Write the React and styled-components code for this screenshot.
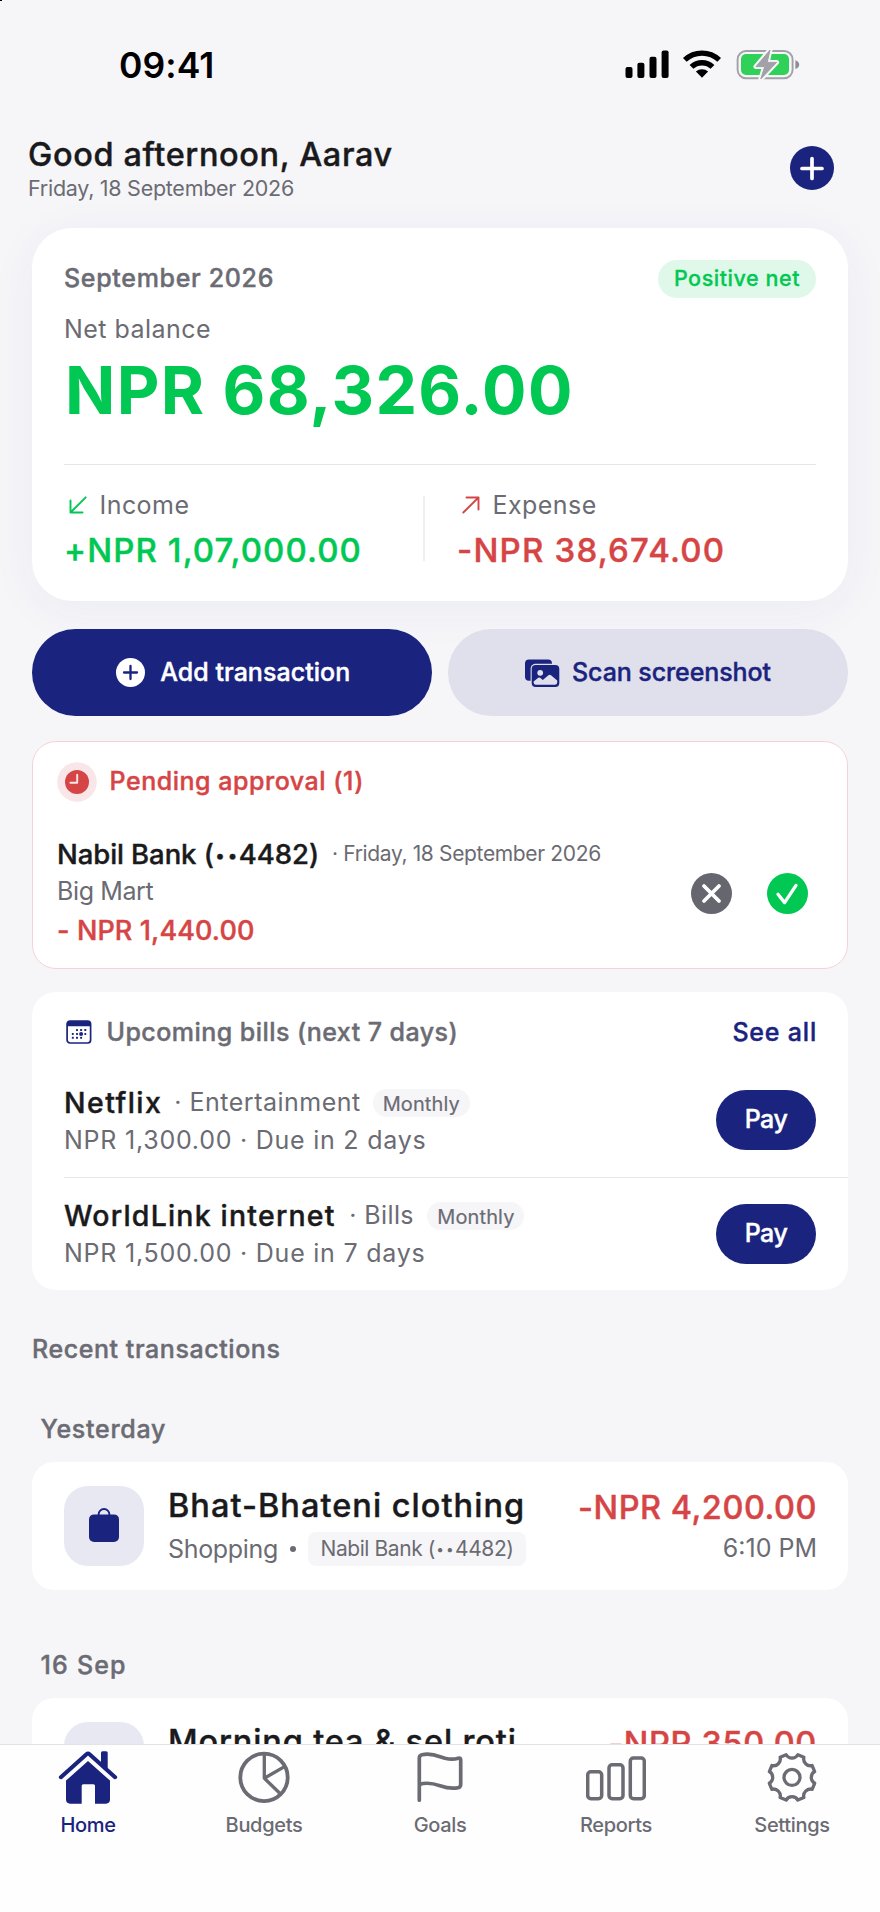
import React from "react";
import styled, { createGlobalStyle } from "styled-components";

const GlobalStyle = createGlobalStyle`
  * {
    box-sizing: border-box;
  }
  body {
    margin: 0;
    background: #f6f6f9;
    font-family: Inter, "Liberation Sans", sans-serif;
    color: #1a1a1c;
  }
  svg {
    display: block;
    flex-shrink: 0;
  }
`;

const colors = {
  bg: "#f6f6f9",
  navy: "#1a237e",
  green: "#00c853",
  red: "#d64545",
  gray: "#6b6b73",
};

const Screen = styled.div`
  position: relative;
  width: 880px;
  height: 1912px;
  display: flex;
  flex-direction: column;
  overflow: hidden;
`;

const Corner = styled.div`
  position: absolute;
  top: 0;
  left: 0;
  width: 2px;
  height: 1px;
  background: #000;
`;

const Content = styled.main`
  flex: 1;
  min-height: 0;
  overflow: hidden;
`;

/* the one text part: size, weight, line height, tracking and colour vary;
   the thin stroke takes medium text half way to semibold */
const Text = styled.span`
  display: block;
  white-space: nowrap;
  font-size: ${(p) => p.$size || 25}px;
  font-weight: ${(p) => p.$weight || 400};
  line-height: ${(p) => p.$line || 30}px;
  letter-spacing: ${(p) => p.$track || 0}px;
  color: ${(p) => p.$color || colors.gray};
  margin-top: ${(p) => p.$top || 0}px;
  -webkit-text-stroke: ${(p) => (p.$weight === 500 ? "0.4px" : "0")};
`;

const StatusBar = styled.div`
  height: 130px;
  padding: 48px 80.5px 0 119px;
  display: flex;
  justify-content: space-between;
`;

const StatusIcons = styled.div`
  display: flex;
  gap: 14.75px;
`;

const Header = styled.header`
  height: 98px;
  padding: 6px 46px 0 28px;
  display: flex;
  justify-content: space-between;
`;

const RoundButton = styled.button`
  width: ${(p) => p.$size}px;
  height: ${(p) => p.$size}px;
  margin: ${(p) => p.$top || 0}px 0 0;
  padding: 0;
  border: none;
  border-radius: 50%;
  background: ${(p) => p.$bg};
`;

const Body = styled.div`
  padding: 0 32px;
`;

const BalanceCard = styled.section`
  height: 372.6px;
  padding: 32px;
  border-radius: 40px;
  background: #fff;
  box-shadow: 0 8px 48px rgba(26, 35, 126, 0.05);
`;

const SpreadRow = styled.div`
  display: flex;
  justify-content: space-between;
`;

const NetBadge = styled.span`
  width: 158px;
  height: 38px;
  border-radius: 19px;
  background: #e0f8ea;
  color: ${colors.green};
  font-size: 21.5px;
  font-weight: 500;
  -webkit-text-stroke: 0.3px;
  letter-spacing: 0.55px;
  line-height: 37px;
  text-align: center;
`;

const Balance = styled(Text)`
  padding-left: 1px;
`;

const Stats = styled.div`
  display: flex;
  margin-top: 36px;
  padding-top: 25px;
  border-top: 1px solid #e6e6ea;
`;

const Stat = styled.div`
  width: ${(p) => p.$width || "auto"};
`;

const StatLabel = styled.div`
  display: flex;
  gap: 11.5px;
`;

const StatDivider = styled.div`
  width: 2px;
  height: 65px;
  margin: 6px 32px 0 0;
  background: #eeeef1;
`;

const Actions = styled.div`
  display: grid;
  grid-template-columns: 1fr 1fr;
  gap: 16px;
  margin-top: 28.4px;
`;

const ActionButton = styled.button`
  display: flex;
  align-items: center;
  justify-content: center;
  gap: ${(p) => p.$gap}px;
  height: 87.5px;
  padding: 0 0 0 ${(p) => p.$shift || 0}px;
  border: none;
  border-radius: 44px;
  background: ${(p) => p.$bg};
  color: ${(p) => p.$color};
  font-family: inherit;
  font-size: 25px;
  font-weight: 500;
  -webkit-text-stroke: 0.4px;
  letter-spacing: ${(p) => p.$track}px;
  line-height: 30px;

  span {
    margin-bottom: 2px;
  }
`;

const PendingCard = styled.section`
  height: 228px;
  margin-top: 24.5px;
  padding: 20px 39.5px 0 24px;
  border: 1px solid #f4d3d6;
  border-radius: 24px;
  background: #fff;
`;

const PendingHead = styled.div`
  display: flex;
  align-items: center;
  gap: 12.5px;
  height: 40px;

  ${Text} {
    margin-bottom: 2px;
  }
`;

const PendingRow = styled.div`
  display: flex;
  justify-content: space-between;
  margin-top: 35px;
`;

const PendingActions = styled.div`
  display: flex;
  gap: 35px;
  padding-top: 36px;
`;

const Line = styled.div`
  display: flex;
  gap: ${(p) => p.$gap || 0}px;
`;

const BillsCard = styled.section`
  height: 297.5px;
  margin-top: 23.5px;
  padding-left: 32px;
  border-radius: 24px;
  background: #fff;
`;

const BillsHead = styled.div`
  display: flex;
  gap: 14.5px;
  height: 71.5px;
  padding: 24px 31px 0 0;

  ${Text}:last-child {
    margin-left: auto;
  }
`;

const Bill = styled.div`
  display: flex;
  justify-content: space-between;
  align-items: center;
  height: 113px;
  padding-right: 32px;

  & + & {
    border-top: 1px solid #e8e8eb;
  }
`;

const Tag = styled.span`
  width: 97px;
  height: 28px;
  margin-top: 3px;
  border-radius: 14px;
  background: ${colors.bg};
  color: ${colors.gray};
  font-size: 20px;
  -webkit-text-stroke: 0.2px;
  letter-spacing: 0.1px;
  line-height: 31px;
  text-align: center;
`;

const PayButton = styled.button`
  width: 100px;
  height: 60px;
  padding: 0 0 2px;
  border: none;
  border-radius: 30px;
  background: ${colors.navy};
  color: #fff;
  font-family: inherit;
  font-size: 25px;
  font-weight: 500;
  -webkit-text-stroke: 0.4px;
  letter-spacing: -0.5px;
  line-height: 30px;
`;

const DayLabel = styled(Text)`
  padding-left: 8.5px;
`;

const TransactionCard = styled.article`
  display: flex;
  height: 128px;
  margin-top: 18px;
  padding: 24px 31px 24px 32px;
  border-radius: 22px;
  background: #fff;
`;

const IconTile = styled.div`
  display: flex;
  align-items: center;
  justify-content: center;
  width: 80px;
  height: 80px;
  margin-right: 24px;
  padding-bottom: 2px;
  border-radius: 24px;
  background: #e8e8f2;
`;

const Meta = styled.div`
  display: flex;
  align-items: center;
  gap: 12px;
  margin-top: 6px;
`;

const Dot = styled.i`
  width: 6px;
  height: 6px;
  border-radius: 50%;
  background: ${colors.gray};
`;

const AccountChip = styled.span`
  width: 218px;
  height: 34px;
  border-radius: 8px;
  background: ${colors.bg};
  color: ${colors.gray};
  font-size: 21px;
  letter-spacing: -0.42px;
  line-height: 33px;
  text-align: center;
  white-space: nowrap;
`;

/* small bullets that mask an account number */
const Mask = styled.span`
  margin: 0 -0.08em 0 0.08em;
  font-size: 0.65em;
  letter-spacing: 0.17em;
  line-height: 0;
  vertical-align: 0.11em;
`;

const AmountColumn = styled.div`
  display: flex;
  flex-direction: column;
  align-items: flex-end;
  margin-left: auto;
  padding-top: 2px;
`;

const TabBar = styled.nav`
  display: grid;
  grid-template-columns: repeat(5, 1fr);
  height: 168px;
  border-top: 1px solid #e4e4e8;
  background: #fefefe;
`;

const Tab = styled.a`
  display: flex;
  flex-direction: column;
  align-items: center;
  gap: 4.5px;
  padding-top: 2px;
  color: ${(p) => (p.$active ? colors.navy : colors.gray)};
  font-size: 20px;
  font-weight: 500;
  letter-spacing: -0.33px;
  line-height: 26px;
`;

const SignalIcon = () => (
  <svg width="44" height="32" viewBox="0 0 44 32">
    <rect x="0.5" y="19" width="7" height="11" rx="2" />
    <rect x="12.4" y="14.7" width="7" height="15.3" rx="2" />
    <rect x="24.5" y="8.7" width="7" height="21.3" rx="2" />
    <rect x="36.6" y="2.4" width="7" height="27.6" rx="2" />
  </svg>
);

const WifiIcon = () => (
  <svg width="38" height="32" viewBox="0 0 38 32">
    <g fill="none" stroke="#000" strokeWidth="5.4">
      <path d="M1.8 11.9A25.2 25.2 0 0 1 36.2 11.9" />
      <path d="M8.5 18.9A15.2 15.2 0 0 1 29.5 18.9" />
    </g>
    <path d="M19 29.8L12.9 23.6A8.8 8.8 0 0 1 25.1 23.6Z" />
  </svg>
);

const BatteryIcon = () => (
  <svg width="63.5" height="32" viewBox="0 0 63.5 32">
    <rect x="1.6" y="3" width="55" height="27.2" rx="8.5" fill="none" stroke="#a2a1a8" strokeWidth="1.9" />
    <rect x="5" y="6" width="48" height="21" rx="5" fill="#2fd158" />
    <path d="M59.4 12.2C62 12.8 63.2 14.6 63.2 16.6S62 20.4 59.4 21Z" fill="#8e8d94" />
    <path
      d="M34 2L20 18.6H28.7L24.8 31L40.6 14.4H31.2Z"
      fill={colors.bg}
      stroke={colors.bg}
      strokeWidth="5"
      strokeLinejoin="round"
    />
    <path d="M34 2L20 18.6H28.7L24.8 31L40.6 14.4H31.2Z" fill="#a2a1a8" stroke="#a2a1a8" strokeLinejoin="round" />
  </svg>
);

const PlusIcon = () => (
  <svg width="44" height="44" viewBox="0 0 44 44">
    <path d="M22 12.5V32.5M12 22.5H32" stroke="#fff" strokeWidth="3.7" strokeLinecap="round" />
  </svg>
);

const ArrowIn = () => (
  <svg width="24" height="30" viewBox="0 0 24 30" fill="none" stroke={colors.green} strokeWidth="1.9" strokeLinecap="round" strokeLinejoin="round">
    <path d="M21.7 7.3L6.5 22.5M6.5 10.5V22.5H18.5" />
  </svg>
);

const ArrowOut = () => (
  <svg width="24" height="30" viewBox="0 0 24 30" fill="none" stroke={colors.red} strokeWidth="1.9" strokeLinecap="round" strokeLinejoin="round">
    <path d="M6.3 22.5L21.5 7.5M9.5 7.5H21.5V19.5" />
  </svg>
);

const AddCircleIcon = () => (
  <svg width="29" height="29" viewBox="0 0 29 29">
    <circle cx="14.5" cy="14.5" r="14.5" fill="#fff" />
    <path d="M14.5 8V21M8 14.5H21" stroke={colors.navy} strokeWidth="2.3" strokeLinecap="round" />
  </svg>
);

const PhotosIcon = () => (
  <svg width="34.5" height="28" viewBox="0 0 34.5 28">
    <path d="M4 0.5H23a4 4 0 0 1 4 4V8H9V21.8H4a4 4 0 0 1-4-4V4.5a4 4 0 0 1 4-4Z" fill={colors.navy} />
    <rect x="5.6" y="4.8" width="29.2" height="24" rx="5" fill="#e0e0ec" />
    <rect x="6.7" y="5.9" width="27.6" height="22" rx="4" fill={colors.navy} />
    <circle cx="15.2" cy="13.8" r="2.9" fill="#e0e0ec" />
    <path
      d="M8.6 22.6L13.3 18.8Q14.4 18 15.4 18.9L17.8 21L23.4 16.2Q24.7 15.2 26 16.2L32.2 21.6V23.4a2.4 2.4 0 0 1-2.4 2.4H11a2.4 2.4 0 0 1-2.4-2.4Z"
      fill="#e0e0ec"
    />
  </svg>
);

const ClockIcon = () => (
  <svg width="40" height="40" viewBox="0 0 40 40">
    <circle cx="20" cy="20" r="19.8" fill="#f8e6e8" />
    <circle cx="20" cy="20" r="12" fill={colors.red} />
    <path d="M20.2 12.8V20.7H13.4" fill="none" stroke="#f8e6e8" strokeWidth="1.9" strokeLinecap="round" strokeLinejoin="round" />
  </svg>
);

const CrossIcon = () => (
  <svg width="41" height="41" viewBox="0 0 41 41">
    <path d="M13 13L28 28M28 13L13 28" stroke="#fff" strokeWidth="3.8" strokeLinecap="round" />
  </svg>
);

const CheckIcon = () => (
  <svg width="41" height="41" viewBox="0 0 41 41" fill="none">
    <path d="M11 21.3L17.6 29.6L29 12.4" stroke="#fff" strokeWidth="3.3" strokeLinecap="round" strokeLinejoin="round" />
  </svg>
);

const calendarDots = [
  [13, 14], [17.1, 14], [21.3, 14],
  [8.8, 17.9], [13, 17.9], [21.3, 17.9],
  [8.8, 21.8], [13, 21.8], [17.1, 21.8],
];

const CalendarIcon = () => (
  <svg width="28" height="30" viewBox="0 0 28 30" fill={colors.navy}>
    <rect x="3.1" y="5" width="23.5" height="22" rx="3" fill="none" stroke={colors.navy} strokeWidth="1.7" />
    <path d="M3 10.2V8a3 3 0 0 1 3-3H23.7a3 3 0 0 1 3 3V10.2Z" />
    {calendarDots.map(([x, y]) => (
      <rect key={`${x}-${y}`} x={x - 1} y={y - 1} width="2" height="2" rx="0.6" />
    ))}
    <circle cx="17.1" cy="17.9" r="2" />
  </svg>
);

const BagIcon = () => (
  <svg width="30" height="34" viewBox="0 0 30 34">
    <rect y="6.4" width="30" height="27.6" rx="5" fill={colors.navy} />
    <path d="M9.6 7.4V6.4a5.4 5.4 0 0 1 10.8 0V7.4" fill="none" stroke={colors.navy} strokeWidth="1.9" />
  </svg>
);

const CupIcon = () => (
  <svg width="34" height="26" viewBox="0 0 34 26" fill={colors.navy}>
    <path d="M2 2H24V14a8 8 0 0 1-8 8H10a8 8 0 0 1-8-8Z" />
    <path d="M24 5h2a5 5 0 0 1 0 10h-2" fill="none" stroke={colors.navy} strokeWidth="2.4" />
  </svg>
);

const HomeIcon = () => (
  <svg width="60" height="60" viewBox="0 0 60 60" fill={colors.navy}>
    <path d="M43 17V5.8a1.5 1.5 0 0 1 1.5-1.5h3.7a1.5 1.5 0 0 1 1.5 1.5V23Z" />
    <path d="M3 30.1L28.6 7.4Q30 6.2 31.4 7.4L57 30.1" fill="none" stroke="#fefefe" strokeWidth="4" transform="translate(0 3.6)" />
    <path d="M2.9 30.2L28.5 7.2Q30 5.9 31.5 7.2L57.1 30.2" fill="none" stroke={colors.navy} strokeWidth="4.1" strokeLinecap="round" />
    <path d="M30 14L52 33.6V52.6a4.1 4.1 0 0 1-4.1 4.1H37V38.7a1.5 1.5 0 0 0-1.5-1.5H25.2a1.5 1.5 0 0 0-1.5 1.5V56.7H12.1A4.1 4.1 0 0 1 8 52.6V33.6Z" />
  </svg>
);

const BudgetsIcon = () => (
  <svg width="60" height="60" viewBox="0 0 60 60" fill="none" stroke={colors.gray} strokeWidth="3.8">
    <circle cx="30" cy="30.4" r="23.7" />
    <path d="M30.3 7V31.2L50.5 19.6M30.3 31.2L46.3 46.8" strokeWidth="3.3" strokeLinejoin="round" />
  </svg>
);

const GoalsIcon = () => (
  <svg width="60" height="60" viewBox="0 0 60 60" fill="none" stroke={colors.gray} strokeWidth="3.7" strokeLinecap="round" strokeLinejoin="round">
    <path d="M9.3 53.2V11C9.3 9.2 10.4 8.2 12 7.8C22 5.4 29 9.6 35 11.3C41 12.8 45 12.3 48.2 11.2C49.9 10.7 50.7 11.4 50.7 13V37.2C50.7 39.3 49.8 40.3 48 40.7C42 42 36 40.8 30 38.8C23 36.3 17 34.8 9.5 37.5" />
  </svg>
);

const ReportsIcon = () => (
  <svg width="60" height="60" viewBox="0 0 60 60" fill="none" stroke={colors.gray} strokeWidth="3.5">
    <rect x="1.7" y="24.8" width="14" height="26.9" rx="3.2" />
    <rect x="23" y="17.8" width="14" height="33.9" rx="3.2" />
    <rect x="44.3" y="11" width="14" height="40.7" rx="3.2" />
  </svg>
);

/* eight teeth, with a round notch between each pair */
const gearPoint = (deg, r) => {
  const a = (deg * Math.PI) / 180;
  return `${(30 + r * Math.cos(a)).toFixed(2)} ${(30.4 + r * Math.sin(a)).toFixed(2)}`;
};
const gearPath = Array.from({ length: 8 }, (_, i) => {
  const a = 22.5 + i * 45;
  return `${i ? "L" : "M"}${gearPoint(a - 8, 23.4)}L${gearPoint(a + 8, 23.4)}A6.8 6.8 0 0 0 ${gearPoint(a + 37, 23.4)}`;
}).join("");

const SettingsIcon = () => (
  <svg width="60" height="60" viewBox="0 0 60 60" fill="none" stroke={colors.gray} strokeWidth="3.3" strokeLinejoin="round">
    <path d={`${gearPath}Z`} />
    <circle cx="30" cy="30.4" r="8" />
  </svg>
);

const bills = [
  { name: "Netflix", track: 1.43, gap: 12, category: "Entertainment", catTrack: 0.5, due: "NPR 1,300.00 · Due in 2 days" },
  { name: "WorldLink internet", track: 1.2, gap: 13.5, category: "Bills", catTrack: 0.4, due: "NPR 1,500.00 · Due in 7 days" },
];

const tabs = [
  { label: "Home", icon: <HomeIcon />, active: true },
  { label: "Budgets", icon: <BudgetsIcon /> },
  { label: "Goals", icon: <GoalsIcon /> },
  { label: "Reports", icon: <ReportsIcon /> },
  { label: "Settings", icon: <SettingsIcon /> },
];

const Account = ({ bank, digits }) => (
  <>
    {bank} (<Mask>••</Mask>{digits})
  </>
);

const Transaction = ({ icon, title, track, category, amount, amountTrack, time }) => (
  <TransactionCard>
    <IconTile>{icon}</IconTile>
    <div>
      <Text $size={32.5} $weight={500} $line={40} $track={track} $color="#1a1a1c">{title}</Text>
      {category && (
        <Meta>
          <Text $track={-0.32}>{category}</Text>
          <Dot />
          <AccountChip>
            <Account bank="Nabil Bank" digits="4482" />
          </AccountChip>
        </Meta>
      )}
    </div>
    <AmountColumn>
      <Text $size={32.5} $weight={500} $line={40} $track={amountTrack} $color={colors.red}>{amount}</Text>
      {time && <Text $top={5.5}>{time}</Text>}
    </AmountColumn>
  </TransactionCard>
);

const App = () => {
  return (
    <Screen>
      <GlobalStyle />
      <Corner />
      <Content>
        <StatusBar>
          <Text $size={35.5} $weight={600} $line={36} $track={0.1} $color="#000">09:41</Text>
          <StatusIcons>
            <SignalIcon />
            <WifiIcon />
            <BatteryIcon />
          </StatusIcons>
        </StatusBar>

        <Header>
          <div>
            <Text $size={32.5} $weight={500} $line={37} $track={0.62} $color="#1a1a1c">Good afternoon, Aarav</Text>
            <Text $size={21.5} $line={28} $track={-0.27} $top={1}>Friday, 18 September 2026</Text>
          </div>
          <RoundButton $size={44} $top={10.3} $bg={colors.navy}>
            <PlusIcon />
          </RoundButton>
        </Header>

        <Body>
          <BalanceCard>
            <SpreadRow>
              <Text $weight={500} $track={0.68} $top={3}>September 2026</Text>
              <NetBadge>Positive net</NetBadge>
            </SpreadRow>
            <Text $track={0.46} $top={16}>Net balance</Text>
            <Balance $size={66} $weight={700} $line={76} $track={1.35} $top={8} $color={colors.green}>NPR 68,326.00</Balance>
            <Stats>
              <Stat $width="359px">
                <StatLabel>
                  <ArrowIn />
                  <Text $track={0.45}>Income</Text>
                </StatLabel>
                <Text $size={33} $weight={500} $line={40} $track={1.1} $top={9.5} $color={colors.green}>+NPR 1,07,000.00</Text>
              </Stat>
              <StatDivider />
              <Stat>
                <StatLabel>
                  <ArrowOut />
                  <Text $track={0.45}>Expense</Text>
                </StatLabel>
                <Text $size={33} $weight={500} $line={40} $track={1.2} $top={9.5} $color={colors.red}>-NPR 38,674.00</Text>
              </Stat>
            </Stats>
          </BalanceCard>

          <Actions>
            <ActionButton $bg={colors.navy} $color="#fff" $gap={15.5} $shift={2} $track={0.04}>
              <AddCircleIcon />
              <span>Add transaction</span>
            </ActionButton>
            <ActionButton $bg="#e0e0ec" $color={colors.navy} $gap={12.5} $track={-0.09}>
              <PhotosIcon />
              <span>Scan screenshot</span>
            </ActionButton>
          </Actions>

          <PendingCard>
            <PendingHead>
              <ClockIcon />
              <Text $weight={500} $track={0.53} $color={colors.red}>Pending approval (1)</Text>
            </PendingHead>
            <PendingRow>
              <div>
                <Line $gap={13}>
                  <Text $size={27.5} $weight={500} $line={34} $track={-0.08} $color="#1a1a1c">
                    <Account bank="Nabil Bank" digits="4482" />
                  </Text>
                  <Text $size={21} $line={28} $track={-0.35} $top={3}>· Friday, 18 September 2026</Text>
                </Line>
                <Text $track={-0.39} $top={5}>Big Mart</Text>
                <Text $size={27} $weight={500} $line={34} $track={0.11} $top={8} $color={colors.red}>- NPR 1,440.00</Text>
              </div>
              <PendingActions>
                <RoundButton $size={41} $bg="#66666f">
                  <CrossIcon />
                </RoundButton>
                <RoundButton $size={41} $bg={colors.green}>
                  <CheckIcon />
                </RoundButton>
              </PendingActions>
            </PendingRow>
          </PendingCard>

          <BillsCard>
            <BillsHead>
              <CalendarIcon />
              <Text $weight={500} $track={0.45} $top={1}>Upcoming bills (next 7 days)</Text>
              <Text $weight={500} $track={0.8} $top={1} $color={colors.navy}>See all</Text>
            </BillsHead>
            {bills.map((bill) => (
              <Bill key={bill.name}>
                <div>
                  <Line $gap={bill.gap}>
                    <Text $size={28.5} $weight={500} $line={34} $track={bill.track} $color="#1a1a1c">{bill.name}</Text>
                    <Text $track={bill.catTrack} $top={1}>· {bill.category}</Text>
                    <Tag>Monthly</Tag>
                  </Line>
                  <Text $track={0.76} $top={5}>{bill.due}</Text>
                </div>
                <PayButton>Pay</PayButton>
              </Bill>
            ))}
          </BillsCard>

          <Text $weight={500} $track={0.57} $top={44}>Recent transactions</Text>

          <DayLabel $weight={500} $track={0.72} $top={50}>Yesterday</DayLabel>
          <Transaction
            icon={<BagIcon />}
            title="Bhat-Bhateni clothing"
            track={1.03}
            category="Shopping"
            amount="-NPR 4,200.00"
            amountTrack={0.51}
            time="6:10 PM"
          />

          <DayLabel $weight={500} $track={1.2} $top={60}>16 Sep</DayLabel>
          <Transaction
            icon={<CupIcon />}
            title="Morning tea & sel roti"
            track={0.86}
            amount="-NPR 350.00"
            amountTrack={0.65}
          />
        </Body>
      </Content>

      <TabBar>
        {tabs.map((tab) => (
          <Tab key={tab.label} $active={tab.active}>
            {tab.icon}
            {tab.label}
          </Tab>
        ))}
      </TabBar>
    </Screen>
  );
};

export default App;
